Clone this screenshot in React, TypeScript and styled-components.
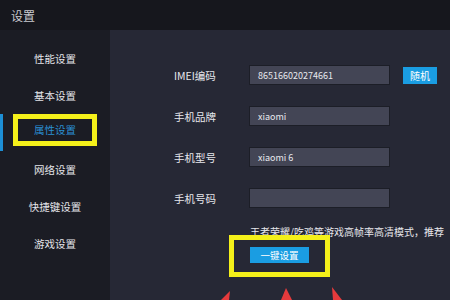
import React, { FC } from 'react'
import styled, { createGlobalStyle } from 'styled-components'

const GlobalStyle = createGlobalStyle`
  html, body {
    margin: 0;
    padding: 0;
    background: #262835;
    overflow: hidden;
  }
  * {
    box-sizing: border-box;
  }
`

const Window = styled('div')`
  position: relative;
  width: 450px;
  height: 300px;
  overflow: hidden;
  display: flex;
  flex-direction: column;
  font-family: 'Noto Sans CJK SC', 'Noto Sans', sans-serif;
  color: #e2e3e8;
`

const TitleBar = styled('header')`
  height: 30px;
  flex: none;
  display: flex;
  align-items: center;
  padding-left: 11px;
  background: #16171d;
  font-size: 12px;
  color: #c9cad0;
`

const Body = styled('div')`
  flex: 1;
  display: flex;
  min-height: 0;
`

const Sidebar = styled('nav')`
  width: 110px;
  flex: none;
  padding-top: 10px;
  background: #1b1c24;
`

const NavItem = styled('div')<{ $active?: boolean }>`
  height: 37px;
  display: flex;
  align-items: center;
  padding-left: 10px;
  border-left: 3px solid ${(p) => (p.$active ? '#1d8fd6' : 'transparent')};
`

const NavLabel = styled('span')<{ $active?: boolean }>`
  width: 84px;
  height: 32px;
  margin-top: ${(p) => (p.$active ? '-6px' : '0')};
  display: flex;
  align-items: center;
  justify-content: center;
  border: 5px solid ${(p) => (p.$active ? '#f4f01a' : 'transparent')};
  font-size: 10.5px;
  color: ${(p) => (p.$active ? '#2a8fd2' : '#e4e5ea')};
`

const Main = styled('main')`
  flex: 1;
  padding: 35px 0 0 64px;
  background: #262835;
  display: flex;
  flex-direction: column;
  gap: 21px;
`

const Row = styled('div')`
  display: flex;
  align-items: center;
  height: 20px;
`

const Label = styled('span')`
  width: 75px;
  font-size: 10.5px;
  color: #e6e7ec;
  white-space: nowrap;
`

const Field = styled('div')`
  width: 141px;
  height: 20px;
  display: flex;
  align-items: center;
  padding-left: 8px;
  background: #434555;
  border: 1px solid #1c1e27;
  font-size: 9px;
  color: #e8e9ee;
`

const SmallButton = styled('button')`
  margin-left: 13px;
  width: 34px;
  height: 17px;
  padding: 0;
  border: none;
  background: #1a9de2;
  color: #ffffff;
  font-family: inherit;
  font-size: 10px;
`

const Hint = styled('p')`
  margin: -3px 0 0 76px;
  font-size: 10px;
  line-height: 12px;
  white-space: nowrap;
  color: #e6e7ec;
`

const Highlight = styled('div')`
  align-self: flex-start;
  margin: -24px 0 0 55px;
  padding: 7px 16px 9px 16px;
  border: 5px solid #f4f01a;
`

const PrimaryButton = styled('button')`
  display: block;
  width: 59px;
  height: 16px;
  padding: 0;
  border: none;
  background: #1a9de2;
  color: #ffffff;
  font-family: inherit;
  font-size: 9.5px;
`

const Arrows = styled('svg')`
  position: absolute;
  left: 215px;
  top: 280px;
`

const navItems = ['性能设置', '基本设置', '属性设置', '网络设置', '快捷键设置', '游戏设置']

const fields = [
  { label: 'IMEI编码', value: '865166020274661', random: true },
  { label: '手机品牌', value: 'xiaomi' },
  { label: '手机型号', value: 'xiaomi 6' },
  { label: '手机号码', value: '' },
]

const App: FC = () => {
  return (
    <Window>
      <GlobalStyle />
      <TitleBar>设置</TitleBar>
      <Body>
        <Sidebar>
          {navItems.map((item) => (
            <NavItem key={item} $active={item === '属性设置'}>
              <NavLabel $active={item === '属性设置'}>{item}</NavLabel>
            </NavItem>
          ))}
        </Sidebar>
        <Main>
          {fields.map((f) => (
            <Row key={f.label}>
              <Label>{f.label}</Label>
              <Field>{f.value}</Field>
              {f.random && <SmallButton>随机</SmallButton>}
            </Row>
          ))}
          <Hint>王者荣耀/吃鸡等游戏高帧率高清模式，推荐</Hint>
          <Highlight>
            <PrimaryButton>一键设置</PrimaryButton>
          </Highlight>
        </Main>
      </Body>
      <Arrows width="135" height="20" viewBox="0 0 135 20">
        <polygon points="15,11 6,20 14,20" fill="#e63a3c" />
        <polygon points="71,8 66,20 77,20" fill="#e63a3c" />
        <polygon points="117,7 118,20 127,20" fill="#e63a3c" />
      </Arrows>
    </Window>
  )
}

export default App
